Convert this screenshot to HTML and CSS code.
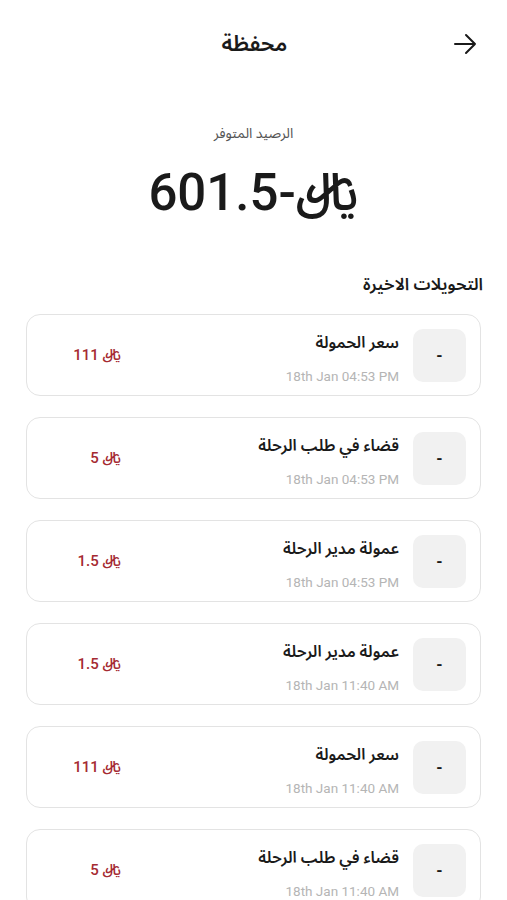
FILE: index.html
```html
<!DOCTYPE html>
<html lang="ar" dir="rtl">
<head>
    <meta charset="utf-8">
    <title>محفظة</title>
    <link rel="stylesheet" href="styles.css">
</head>
<body>
    <header class="topbar">
        <button class="back" aria-label="رجوع">
            <svg width="24" height="24" viewBox="0 0 24 24" fill="none" stroke="#1a1a1a" stroke-width="2" stroke-linecap="round" stroke-linejoin="round">
                <path d="M2 12h20M13 3l9 9-9 9"/>
            </svg>
        </button>
        <h1>محفظة</h1>
        <span class="spacer"></span>
    </header>

    <section class="balance">
        <div class="balance-label">الرصيد المتوفر</div>
        <div class="balance-value">﷼<span dir="ltr">601.5-</span></div>
    </section>

    <h2 class="section-title">التحويلات الاخيرة</h2>

    <div class="list">
        <div class="card">
            <div class="icon">-</div>
            <div class="info">
                <div class="title">سعر الحمولة</div>
                <div class="date" dir="ltr">18th Jan 04:53 PM</div>
            </div>
            <div class="amount">﷼ 111</div>
        </div>
        <div class="card">
            <div class="icon">-</div>
            <div class="info">
                <div class="title">قضاء في طلب الرحلة</div>
                <div class="date" dir="ltr">18th Jan 04:53 PM</div>
            </div>
            <div class="amount">﷼ 5</div>
        </div>
        <div class="card">
            <div class="icon">-</div>
            <div class="info">
                <div class="title">عمولة مدير الرحلة</div>
                <div class="date" dir="ltr">18th Jan 04:53 PM</div>
            </div>
            <div class="amount">﷼ 1.5</div>
        </div>
        <div class="card">
            <div class="icon">-</div>
            <div class="info">
                <div class="title">عمولة مدير الرحلة</div>
                <div class="date" dir="ltr">18th Jan 11:40 AM</div>
            </div>
            <div class="amount">﷼ 1.5</div>
        </div>
        <div class="card">
            <div class="icon">-</div>
            <div class="info">
                <div class="title">سعر الحمولة</div>
                <div class="date" dir="ltr">18th Jan 11:40 AM</div>
            </div>
            <div class="amount">﷼ 111</div>
        </div>
        <div class="card">
            <div class="icon">-</div>
            <div class="info">
                <div class="title">قضاء في طلب الرحلة</div>
                <div class="date" dir="ltr">18th Jan 11:40 AM</div>
            </div>
            <div class="amount">﷼ 5</div>
        </div>
    </div>
</body>
</html>
```

FILE: styles.css
```css
body {
    margin: 0;
    padding: 0 26px;
    font-family: Roboto, "Noto Sans Arabic", "DejaVu Sans", sans-serif;
    color: #1a1a1a;
    background: #fff;
}
.topbar {
    display: flex;
    align-items: center;
    justify-content: space-between;
    height: 88px;
    margin-right: -2px;
}
.back {
    width: 36px;
    height: 36px;
    padding: 0;
    border: none;
    background: none;
    display: flex;
    align-items: center;
    justify-content: center;
}
.spacer {
    width: 36px;
}
.topbar h1 {
    margin: 0;
    font-size: 22px;
    font-weight: 600;
}
.balance {
    text-align: center;
    padding-top: 31px;
}
.balance-label {
    font-size: 14px;
    color: #555;
}
.balance-value {
    margin-top: 14px;
    font-size: 51px;
    font-weight: 500;
    line-height: 1.2;
}
.section-title {
    margin: 44px 0 0;
    margin-right: -2px;
    font-size: 17px;
    font-weight: 600;
}
.list {
    display: flex;
    flex-direction: column;
    gap: 21px;
    margin-top: 11px;
}
.card {
    display: flex;
    align-items: center;
    height: 80px;
    border: 1px solid #e3e3e3;
    border-radius: 14px;
    padding: 0 14px 0 0;
}
.icon {
    width: 53px;
    height: 53px;
    border-radius: 10px;
    background: #f1f1f1;
    display: flex;
    align-items: center;
    justify-content: center;
    font-weight: 700;
    font-size: 16px;
}
.info {
    flex: 1;
    margin-right: 14px;
    display: flex;
    flex-direction: column;
    gap: 8px;
}
.title {
    font-size: 16px;
    font-weight: 600;
}
.date {
    text-align: right;
    font-size: 13.5px;
    color: #b5b5b5;
}
.amount {
    width: 70px;
    margin-left: 24px;
    font-size: 15px;
    font-weight: 500;
    color: #a52a32;
}
```
